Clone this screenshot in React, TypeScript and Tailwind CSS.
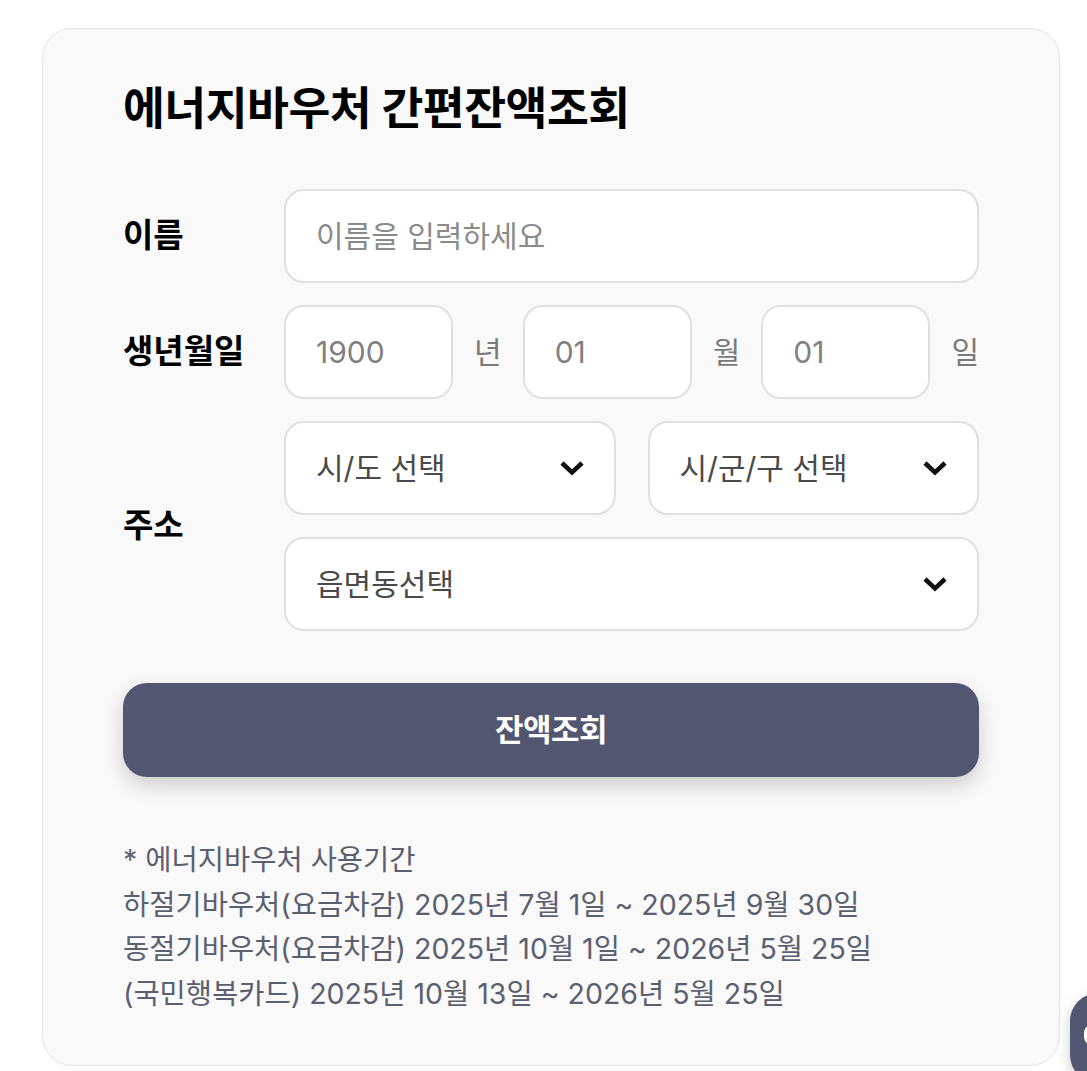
import { useState } from 'react'

const FONT = 'font-[Inter,"Noto_Sans_CJK_KR",sans-serif]'

function Chevron() {
  return (
    <svg width="26" height="17" viewBox="0 0 26 17" fill="none" className="shrink-0">
      <path d="M3 3.5 L13 13 L23 3.5" stroke="#111" strokeWidth="4.5" strokeLinejoin="miter" />
    </svg>
  )
}

function SelectBox({ placeholder, className = '' }: { placeholder: string; className?: string }) {
  const [value, setValue] = useState('')
  return (
    <div className={`relative h-[94px] min-w-0 ${className}`}>
      <select
        value={value}
        onChange={e => setValue(e.target.value)}
        className="w-full min-w-0 h-full appearance-none bg-white border-2 border-[#e0e0e0] rounded-[20px] pl-[30px] pr-[70px] text-[30px] text-[#4a4a4a] outline-none"
      >
        <option value="">{placeholder}</option>
      </select>
      <div className="absolute right-[31px] top-1/2 -translate-y-1/2 pointer-events-none">
        <Chevron />
      </div>
    </div>
  )
}

function Row({ label, children }: { label: string; children: React.ReactNode }) {
  return (
    <div className="flex items-center">
      <div className="w-[161px] shrink-0 text-[33px] font-bold text-black">{label}</div>
      <div className="flex-1 min-w-0">{children}</div>
    </div>
  )
}

export default function App() {
  const [name, setName] = useState('')

  return (
    <div className={`min-h-screen bg-white ${FONT}`}>
      <div className="ml-[42px] mt-[28px] w-[1018px] border border-[#e3e3e3] rounded-[30px] bg-[#f9f9f9] px-[80px] pt-[50px] pb-[49px]">
        <h1 className="text-[45.5px] leading-[60px] font-bold text-black tracking-[-0.5px]">에너지바우처 간편잔액조회</h1>

        <div className="mt-[50px] flex flex-col gap-[22px]">
          <Row label="이름">
            <input
              value={name}
              onChange={e => setName(e.target.value)}
              placeholder="이름을 입력하세요"
              className="w-full h-[94px] bg-white border-2 border-[#e0e0e0] rounded-[20px] px-[30px] text-[30px] text-[#333] placeholder:text-[#8a8a8a] outline-none"
            />
          </Row>

          <Row label="생년월일">
            <div className="flex items-center justify-between text-[30px]">
              <input defaultValue="1900" className="w-[169px] h-[94px] bg-white border-2 border-[#e0e0e0] rounded-[20px] px-[30px] text-[30px] text-[#808080] outline-none" />
              <span className="text-[#7a7a7a]">년</span>
              <input defaultValue="01" className="w-[169px] h-[94px] bg-white border-2 border-[#e0e0e0] rounded-[20px] px-[30px] text-[30px] text-[#808080] outline-none" />
              <span className="text-[#7a7a7a]">월</span>
              <input defaultValue="01" className="w-[169px] h-[94px] bg-white border-2 border-[#e0e0e0] rounded-[20px] px-[30px] text-[30px] text-[#808080] outline-none" />
              <span className="text-[#7a7a7a]">일</span>
            </div>
          </Row>

          <Row label="주소">
            <div className="flex flex-col gap-[22px]">
              <div className="grid grid-cols-2 gap-[32px]">
                <SelectBox placeholder="시/도 선택" />
                <SelectBox placeholder="시/군/구 선택" />
              </div>
              <SelectBox placeholder="읍면동선택" />
            </div>
          </Row>
        </div>

        <button className="mt-[52px] w-full h-[94px] rounded-[24px] bg-[#525670] text-white text-[31px] font-bold tracking-[-0.5px] shadow-[0_8px_20px_rgba(0,0,0,0.18)]">
          잔액조회
        </button>

        <div className="mt-[61px] text-[28.5px] leading-[44.5px] text-[#5b6070]">
          <p>* 에너지바우처 사용기간</p>
          <p>하절기바우처(요금차감) 2025년 7월 1일 ~ 2025년 9월 30일</p>
          <p>동절기바우처(요금차감) 2025년 10월 1일 ~ 2026년 5월 25일</p>
          <p>(국민행복카드) 2025년 10월 13일 ~ 2026년 5월 25일</p>
        </div>
      </div>

      {/* floating button, mostly off-screen */}
      <div className="fixed left-[1070px] top-[993px] w-[90px] h-[90px] rounded-[28px] bg-[#525670] shadow-[0_4px_14px_rgba(0,0,0,0.2)]">
        <div className="absolute left-[14px] top-[32px] w-[8px] h-[20px] rounded-l-full bg-white" />
      </div>
    </div>
  )
}
